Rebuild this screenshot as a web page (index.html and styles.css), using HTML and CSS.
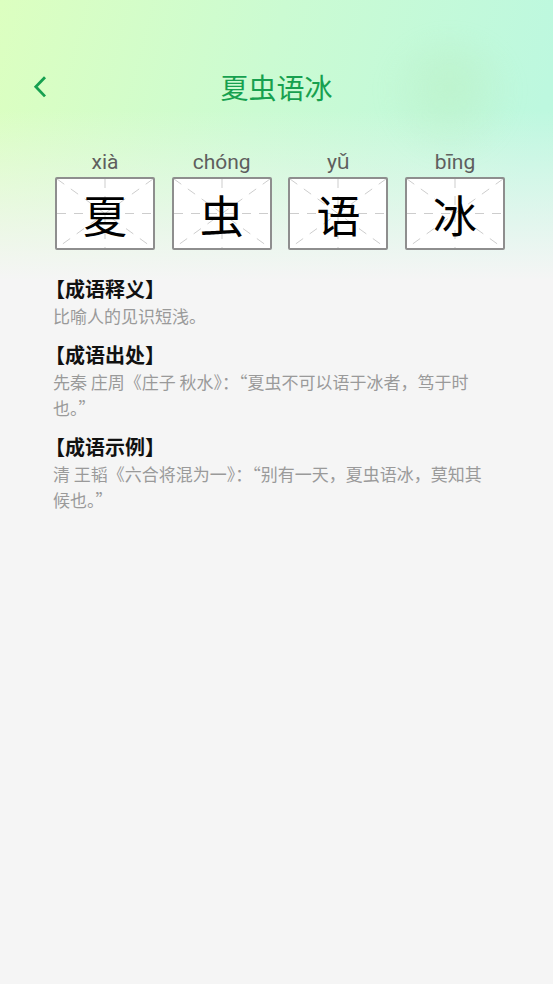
FILE: index.html
```html
<!DOCTYPE html>
<html lang="zh-CN">
<head>
<meta charset="utf-8">
<title>夏虫语冰</title>
<link rel="stylesheet" href="styles.css">
</head>
<body>
<div class="page">
  <div class="bg-blob"></div>
  <header class="header">
    <button class="back" aria-label="返回">
      <svg width="14" height="22" viewBox="0 0 14 22"><path d="M12 1.2 L2.8 10.8 L12 20.4" fill="none" stroke="#16a050" stroke-width="2.8"/></svg>
    </button>
    <h1 class="title">夏虫语冰</h1>
  </header>

  <div class="chars">
    <div class="cell">
      <div class="py">xià</div>
      <div class="box">
        <svg class="guide" viewBox="0 0 100 73" preserveAspectRatio="none"><line x1="0" y1="36.5" x2="100" y2="36.5"/><line x1="50" y1="0" x2="50" y2="73"/><line x1="0" y1="0" x2="100" y2="73"/><line x1="100" y1="0" x2="0" y2="73"/></svg>
        <span class="hz">夏</span>
      </div>
    </div>
    <div class="cell">
      <div class="py">chóng</div>
      <div class="box">
        <svg class="guide" viewBox="0 0 100 73" preserveAspectRatio="none"><line x1="0" y1="36.5" x2="100" y2="36.5"/><line x1="50" y1="0" x2="50" y2="73"/><line x1="0" y1="0" x2="100" y2="73"/><line x1="100" y1="0" x2="0" y2="73"/></svg>
        <span class="hz">虫</span>
      </div>
    </div>
    <div class="cell">
      <div class="py">yǔ</div>
      <div class="box">
        <svg class="guide" viewBox="0 0 100 73" preserveAspectRatio="none"><line x1="0" y1="36.5" x2="100" y2="36.5"/><line x1="50" y1="0" x2="50" y2="73"/><line x1="0" y1="0" x2="100" y2="73"/><line x1="100" y1="0" x2="0" y2="73"/></svg>
        <span class="hz">语</span>
      </div>
    </div>
    <div class="cell">
      <div class="py">bīng</div>
      <div class="box">
        <svg class="guide" viewBox="0 0 100 73" preserveAspectRatio="none"><line x1="0" y1="36.5" x2="100" y2="36.5"/><line x1="50" y1="0" x2="50" y2="73"/><line x1="0" y1="0" x2="100" y2="73"/><line x1="100" y1="0" x2="0" y2="73"/></svg>
        <span class="hz">冰</span>
      </div>
    </div>
  </div>

  <section class="info">
    <h2 class="sec-title">【成语释义】</h2>
    <p class="sec-body">比喻人的见识短浅。</p>
    <h2 class="sec-title">【成语出处】</h2>
    <p class="sec-body">先秦 庄周《庄子 秋水》：“夏虫不可以语于冰者，笃于时也。”</p>
    <h2 class="sec-title">【成语示例】</h2>
    <p class="sec-body">清 王韬《六合将混为一》：“别有一天，夏虫语冰，莫知其候也。”</p>
  </section>
</div>
</body>
</html>
```

FILE: styles.css
```css
* { box-sizing: border-box; }
html, body { margin: 0; padding: 0; }
body {
  width: 553px;
  min-height: 984px;
  background: #f5f5f5;
  font-family: "Noto Sans CJK SC", "Noto Sans", sans-serif;
  overflow: hidden;
}
.page {
  position: relative;
  min-height: 984px;
  padding-top: 59px;
  background:
    linear-gradient(180deg, rgba(245,245,245,0) 0px, rgba(245,245,245,0) 110px, #f5f5f5 280px),
    linear-gradient(105deg, #dcffc0 0%, #cbfbd2 35%, #bdf8df 70%, #bcf7e0 100%);
}
.bg-blob {
  position: absolute;
  left: 385px;
  top: 40px;
  width: 130px;
  height: 120px;
  border-radius: 50% 50% 40% 40%;
  background: radial-gradient(ellipse at 50% 40%, rgba(185,236,190,0.45), rgba(190,240,200,0) 70%);
  filter: blur(10px);
}
.header {
  position: relative;
  height: 56px;
  display: flex;
  align-items: center;
  justify-content: center;
}
.back {
  position: absolute;
  left: 32px;
  top: 16px;
  width: 16px;
  height: 24px;
  padding: 0;
  border: none;
  background: none;
  display: flex;
  align-items: center;
  justify-content: center;
}
.title {
  margin: 0;
  font-size: 28px;
  font-weight: 400;
  color: #17a04f;
  line-height: 56px;
}
.chars {
  display: grid;
  grid-template-columns: repeat(4, 100px);
  column-gap: 16.7px;
  padding-left: 55px;
  margin-top: 34px;
}
.cell {
  display: flex;
  flex-direction: column;
  align-items: center;
}
.py {
  font-family: Roboto, "Noto Sans", sans-serif;
  font-size: 21px;
  line-height: 26px;
  color: #5e5e5e;
  margin-bottom: 2px;
}
.box {
  position: relative;
  width: 100px;
  height: 73px;
  background: #fff;
  border: 2px solid #8e8e8e;
  border-radius: 2px;
  display: flex;
  align-items: center;
  justify-content: center;
}
.guide {
  position: absolute;
  inset: 0;
  width: 100%;
  height: 100%;
}
.guide line {
  stroke: #cdcdcd;
  stroke-width: 1;
  stroke-dasharray: 9 8;
  vector-effect: non-scaling-stroke;
}
.hz {
  position: relative;
  font-size: 44px;
  line-height: 1;
  color: #000;
}
.info {
  padding: 25px 0 0 45px;
}
.sec-title {
  margin: 0;
  font-size: 20px;
  line-height: 28px;
  font-weight: 700;
  color: #111;
}
.sec-body {
  width: 432px;
  margin: 0 0 12px 8px;
  font-size: 17px;
  line-height: 26px;
  color: #9a9a9a;
}
```
